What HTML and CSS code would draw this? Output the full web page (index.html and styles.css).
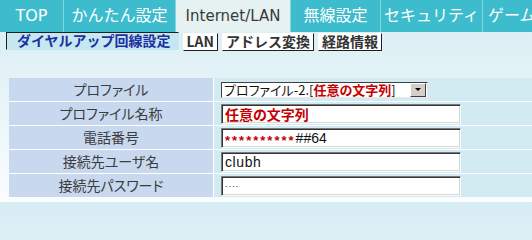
FILE: index.html
```html
<!DOCTYPE html>
<html lang="ja">
<head>
<meta charset="utf-8">
<title>ダイヤルアップ回線設定</title>
<link rel="stylesheet" href="styles.css">
</head>
<body>
<nav class="tabs">
  <a class="tab t-top">TOP</a>
  <a class="tab t-easy">かんたん設定</a>
  <a class="tab t-inet active">Internet/LAN</a>
  <a class="tab t-wl">無線設定</a>
  <a class="tab t-sec">セキュリティ</a>
  <a class="tab t-game">ゲーム</a>
</nav>
<div class="subtabs">
  <span class="sub current">ダイヤルアップ回線設定</span>
  <span class="sub">LAN</span>
  <span class="sub">アドレス変換</span>
  <span class="sub">経路情報</span>
</div>
<div class="form">
  <div class="label">プロファイル</div>
  <div class="value">
    <div class="select">
      <span class="sel-text">プロファイル-2.[<b class="red">任意の文字列</b>]</span>
      <span class="sel-btn"><span class="arrow"></span></span>
    </div>
  </div>
  <div class="label">プロファイル名称</div>
  <div class="value"><div class="field"><b class="red big">任意の文字列</b></div></div>
  <div class="label">電話番号</div>
  <div class="value"><div class="field"><b class="red stars">**********</b><span class="latin">##64</span></div></div>
  <div class="label">接続先ユーザ名</div>
  <div class="value"><div class="field"><span class="latin user">clubh</span></div></div>
  <div class="label">接続先パスワード</div>
  <div class="value"><div class="field"><span class="pw">····</span></div></div>
</div>
</body>
</html>
```
FILE: styles.css
```css
html, body {
  margin: 0;
  padding: 0;
}
body {
  width: 532px;
  height: 202px;
  overflow: hidden;
  background: linear-gradient(180deg, #d6edf3 0px, #e3f2f6 70px, #fafdfe 202px);
  font-family: "Noto Sans CJK JP", sans-serif;
}

/* main tabs */
.tabs {
  display: flex;
  height: 32px;
  background: #3dbccd;
  white-space: nowrap;
  overflow: hidden;
}
.tab {
  box-sizing: border-box;
  flex: none;
  height: 32px;
  border-right: 1px solid #88d6e0;
  color: #fff;
  font-family: "DejaVu Sans", "Noto Sans CJK JP", sans-serif;
  font-size: 16px;
  line-height: 32px;
  text-align: center;
}
.t-top { width: 64px; }
.t-easy { width: 112px; }
.t-inet { width: 115px; }
.t-wl { width: 90px; }
.t-sec { width: 102px; }
.t-game { width: 49px; text-align: left; padding-left: 5px; border-right: none; overflow: hidden; }
.tab.active {
  background: #e6f1f2;
  color: #3a3a3a;
  font-size: 15px;
}

/* sub tabs */
.subtabs {
  display: flex;
  height: 18px;
  padding-left: 6px;
  align-items: flex-start;
}
.sub {
  box-sizing: border-box;
  height: 18px;
  margin-top: 1px;
  margin-right: 4px;
  padding: 0 3px;
  background: #fff;
  border: 1px solid transparent;
  border-right-color: #1e1e1e;
  border-bottom-color: #1e1e1e;
  color: #333;
  font-weight: bold;
  font-size: 14px;
  line-height: 15px;
}
.sub.current {
  margin-top: 0;
  padding: 0 7px 0 10px;
  background: #c4e8f2;
  color: #1f2f9e;
  border-color: #1e1e1e transparent transparent #1e1e1e;
}

/* form grid */
.form {
  display: grid;
  grid-template-columns: 204px 1fr;
  grid-auto-rows: 23px;
  gap: 1px;
  margin: 28px 0 0 9px;
  background: #fff;
}
.label {
  background: #c8d8ee;
  color: #3c3c3c;
  font-size: 14px;
  line-height: 23px;
  text-align: center;
  font-feature-settings: "palt";
}
.value {
  background: #d2eaf2;
  display: flex;
  align-items: center;
  padding-left: 7px;
}

.red { color: #c40000; font-weight: bold; }

.select {
  box-sizing: border-box;
  width: 207px;
  height: 16px;
  display: flex;
  align-items: center;
  justify-content: space-between;
  background: #fff;
  border: 1px solid;
  border-color: #404040 #e8e8e8 #e8e8e8 #404040;
}
.sel-text {
  padding-left: 2px;
  font-size: 13px;
  line-height: 14px;
  color: #111;
  font-feature-settings: "palt";
  white-space: nowrap;
}
.sel-btn {
  box-sizing: border-box;
  width: 16px;
  height: 14px;
  margin-right: 1px;
  background: #d4d0c8;
  border: 1px solid;
  border-color: #fff #404040 #404040 #fff;
  display: flex;
  align-items: center;
  justify-content: center;
}
.arrow {
  width: 0;
  height: 0;
  border-left: 3px solid transparent;
  border-right: 3px solid transparent;
  border-top: 3px solid #000;
}

.field {
  box-sizing: border-box;
  width: 240px;
  height: 20px;
  display: flex;
  align-items: center;
  padding-left: 3px;
  background: #fff;
  border: 1px solid;
  border-color: #7a7a7a #fafafa #fafafa #7a7a7a;
  box-shadow: inset 1px 1px 0 #333, inset -1px -1px 0 #d8d8d8;
  white-space: nowrap;
}
.big { font-size: 14px; line-height: 16px; font-feature-settings: "palt"; }
.stars {
  font-family: "Liberation Sans", sans-serif;
  font-size: 13px;
  letter-spacing: 2px;
  position: relative;
  top: 3px;
}
.latin {
  font-family: "Liberation Sans", sans-serif;
  font-size: 14px;
  color: #111;
}
.user { letter-spacing: 0.6px; }
.pw {
  font-family: "Liberation Sans", sans-serif;
  font-size: 9px;
  color: #222;
  letter-spacing: 0.5px;
}
```
